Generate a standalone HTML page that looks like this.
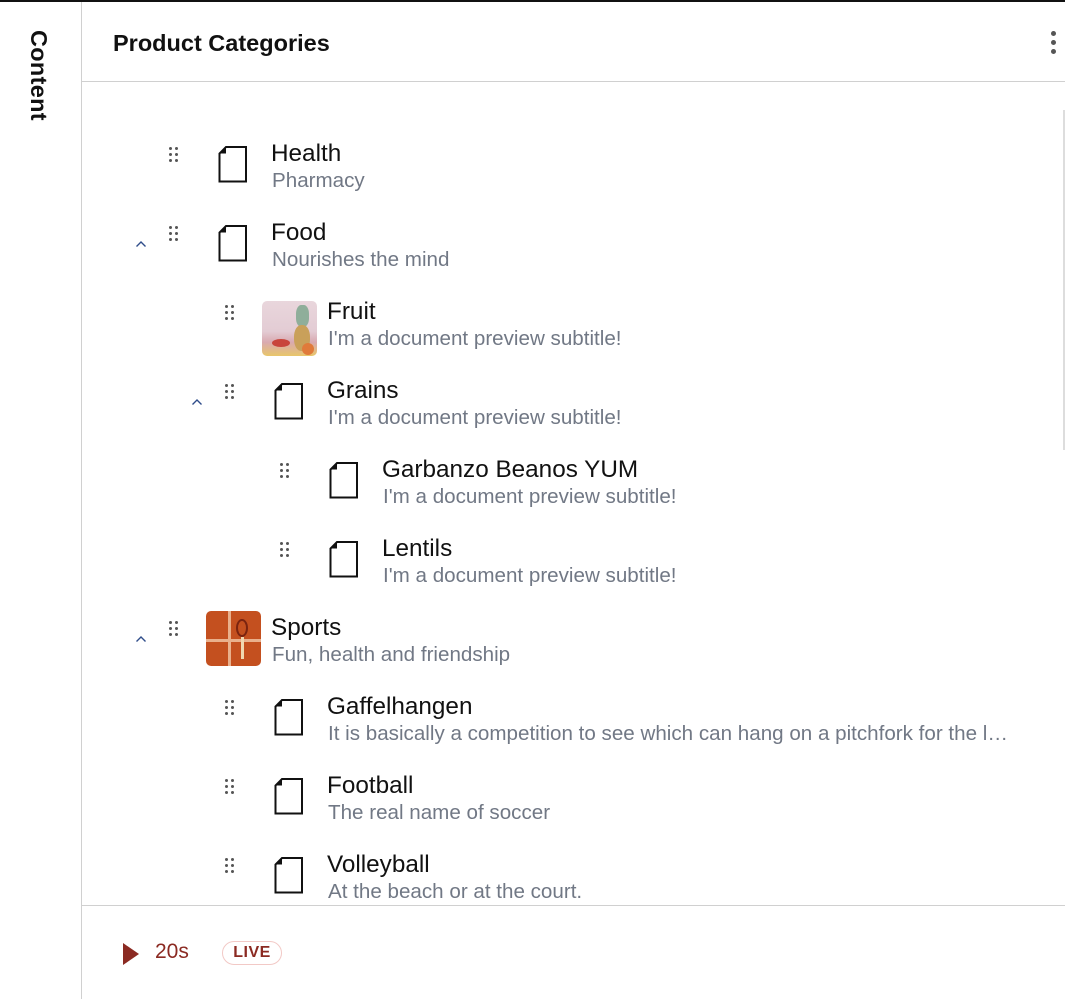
<!DOCTYPE html>
<html><head><meta charset="utf-8"><style>
*{margin:0;padding:0;box-sizing:border-box}
body{width:1065px;height:999px;background:#fff;position:relative;overflow:hidden;font-family:"Segoe UI","Liberation Sans",sans-serif;}
.abs{position:absolute}
.t{position:absolute;font-size:24.3px;color:#111;white-space:nowrap;line-height:1}
.s{position:absolute;font-size:20.6px;color:#717885;white-space:nowrap;line-height:1;overflow:hidden;text-overflow:ellipsis}
.dots{position:absolute;width:10px;height:14px}
.dots i{position:absolute;width:3px;height:3px;border-radius:50%;background:#555}
</style></head><body>
<div class="abs" style="left:0;top:0;width:1065px;height:2px;background:#111"></div>
<div class="abs" style="left:81px;top:2px;width:1px;height:997px;background:#d0d0d0"></div>
<div class="abs" style="left:82px;top:81px;width:983px;height:1px;background:#d0d0d0"></div>
<div class="abs" style="left:1063px;top:110px;width:2px;height:340px;background:#ddd"></div>
<div class="abs" style="left:27px;top:30px;width:24px;height:95px;">
<div style="transform:rotate(90deg);transform-origin:0 0;position:absolute;left:23px;top:0;font-size:23.5px;font-weight:600;color:#111;white-space:nowrap;line-height:22px;letter-spacing:0.3px">Content</div></div>
<div class="abs" style="left:113px;top:30px;font-size:23.5px;font-weight:600;color:#111;white-space:nowrap">Product Categories</div>
<div class="abs" style="left:1051px;top:31px"><div style="width:5px;height:5px;border-radius:50%;background:#555;margin-bottom:4px"></div><div style="width:5px;height:5px;border-radius:50%;background:#555;margin-bottom:4px"></div><div style="width:5px;height:5px;border-radius:50%;background:#555"></div></div>

<div id="rows"></div>
<script>
var rows=[
[0,"Health","Pharmacy",0,0],
[0,"Food","Nourishes the mind",1,0],
[1,"Fruit","I'm a document preview subtitle!",0,1],
[1,"Grains","I'm a document preview subtitle!",1,0],
[2,"Garbanzo Beanos YUM","I'm a document preview subtitle!",0,0],
[2,"Lentils","I'm a document preview subtitle!",0,0],
[0,"Sports","Fun, health and friendship",1,2],
[1,"Gaffelhangen","It is basically a competition to see which can hang on a pitchfork for the longest time",0,0],
[1,"Football","The real name of soccer",0,0],
[1,"Volleyball","At the beach or at the court.",0,0]];
var h="";
rows.forEach(function(r,i){
 var y=153+i*79;var o=[0,56,111][r[0]];
 h+='<div class="dots" style="left:'+(169+o)+'px;top:'+(y-6)+'px">';
 [[0,0],[6,0],[0,6],[6,6],[0,12],[6,12]].forEach(function(p){h+='<i style="left:'+p[0]+'px;top:'+p[1]+'px"></i>'});
 h+='</div>';
 if(r[3]) h+='<svg class="abs" style="left:'+(135+o)+'px;top:'+(y+8)+'px" width="12" height="8"><path d="M1.5 6.5 L6 2 L10.5 6.5" fill="none" stroke="#2f4d8a" stroke-width="1.4"/></svg>';
 if(r[4]==1) h+='<div class="abs" style="left:'+(206+o)+'px;top:'+(y-10)+'px;width:55px;height:55px;border-radius:5px;background:linear-gradient(180deg,#e9d6dc 0%,#e3ccd4 55%,#d9a9b0 75%,#e8c66a 100%);overflow:hidden"><div class="abs" style="left:34px;top:4px;width:13px;height:22px;background:#8fae9a;border-radius:40%"></div><div class="abs" style="left:32px;top:24px;width:16px;height:26px;background:#c9a05a;border-radius:45%"></div><div class="abs" style="left:10px;top:38px;width:18px;height:8px;background:#c8453b;border-radius:50%"></div><div class="abs" style="left:40px;top:42px;width:12px;height:12px;background:#e07a3a;border-radius:50%"></div></div>';
 else if(r[4]==2) h+='<div class="abs" style="left:'+(206+o)+'px;top:'+(y-16)+'px;width:55px;height:55px;border-radius:5px;background:#c4501f;overflow:hidden"><div class="abs" style="left:0;top:28px;width:55px;height:3px;background:#e9b08c"></div><div class="abs" style="left:22px;top:0;width:3px;height:55px;background:#e9b08c"></div><div class="abs" style="left:30px;top:8px;width:12px;height:18px;border:2px solid #7a2410;border-radius:50%"></div><div class="abs" style="left:35px;top:26px;width:3px;height:22px;background:#f0d8b0"></div></div>';
 else h+='<svg class="abs" style="left:'+(218+o)+'px;top:'+(y-7)+'px" width="30" height="37"><path d="M8 1 H28 V35.5 H1.5 V7.5 Z" fill="none" stroke="#111" stroke-width="2"/><path d="M8 1 V7.5 H1.5 Z" fill="#111"/></svg>';
 h+='<div class="t" style="left:'+(271+o)+'px;top:'+(y-11)+'px">'+r[1]+'</div>';
 h+='<div class="s" style="left:'+(272+o)+'px;top:'+(y+18)+'px;max-width:'+(1016-272-o)+'px">'+r[2]+'</div>';
});
document.getElementById('rows').innerHTML=h;
</script>
<div class="abs" style="left:82px;top:906px;width:983px;height:93px;background:#fff"></div>
<div class="abs" style="left:82px;top:905px;width:983px;height:1px;background:#d0d0d0"></div>
<svg class="abs" style="left:122px;top:942px" width="18" height="24"><path d="M1 1 L17 12 L1 23 Z" fill="#8b2a22"/></svg>
<div class="abs" style="left:155px;top:940px;font-size:21px;color:#8b2a22">20s</div>
<div class="abs" style="left:222px;top:941px;width:60px;height:24px;border:1.5px solid #f2c9c6;border-radius:12px;color:#8b2a22;font-size:16px;font-weight:700;text-align:center;line-height:21px;letter-spacing:0.5px">LIVE</div>
</body></html>
